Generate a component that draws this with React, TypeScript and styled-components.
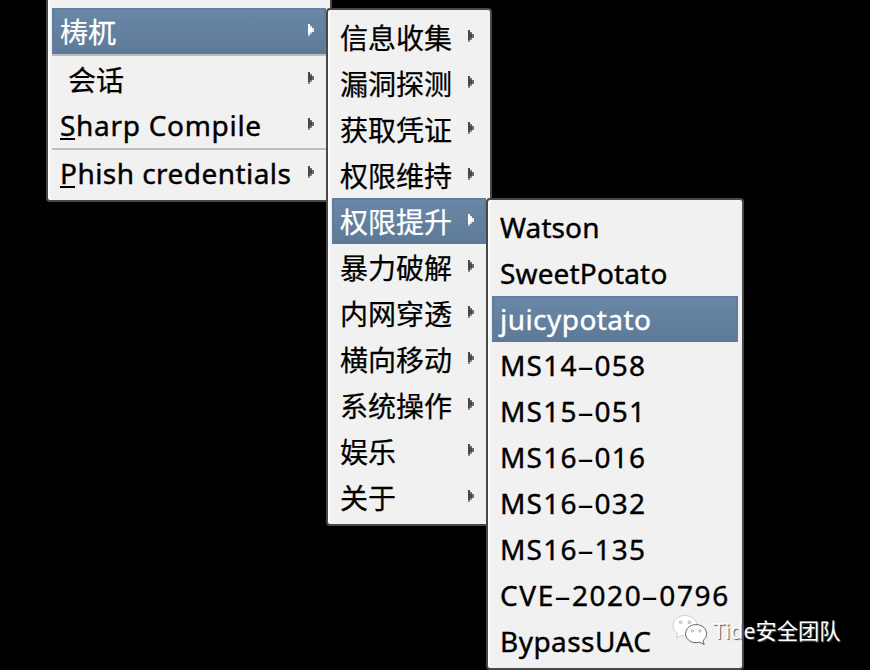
import React from "react";
import styled, { createGlobalStyle, css } from "styled-components";

const GlobalStyle = createGlobalStyle`
  * { box-sizing: border-box; }
  body { margin: 0; background: #000; overflow: hidden; }
`;

const Desktop = styled.main`
  position: relative;
  width: 870px;
  height: 670px;
  overflow: hidden;
  background: #000;
  font-family: "Noto Sans", "Noto Sans CJK SC", sans-serif;
  font-size: 28px;
  color: #000;
`;

const Menu = styled.div<{ $x: number; $y: number; $w: number; $topPad?: number }>`
  position: absolute;
  left: ${(p) => p.$x}px;
  top: ${(p) => p.$y}px;
  width: ${(p) => p.$w}px;
  padding: ${(p) => p.$topPad ?? 4}px 4px 4px;
  border: 2px solid #484848;
  border-radius: 4px;
  background: #f1f1f1;
  box-shadow: inset 2px 0 #fdfdfd;
`;

const Item = styled.div<{ $active?: boolean; $indent?: number }>`
  display: flex;
  align-items: center;
  justify-content: space-between;
  height: 46px;
  padding: 0 12px 0 ${(p) => 8 + (p.$indent ?? 0)}px;
  white-space: pre;
  ${(p) =>
    p.$active &&
    css`
      color: #fff;
      background: linear-gradient(#6a88a7, #5d7997);
      box-shadow: inset 0 2px #607e9d, inset 2px 0 #607d9b, inset -2px 0 #607d9b;
    `}
`;

const Label = styled.span<{ $spacing?: number; $cjk?: boolean }>`
  line-height: 46px;
  height: 46px;
  padding-top: ${(p) => (p.$cjk ? 1 : 0)}px;
  font-weight: 400;
  -webkit-text-stroke: ${(p) => (p.$cjk ? 0.25 : 0.4)}px currentColor;
  letter-spacing: ${(p) => p.$spacing ?? 0}px;
`;

const Mnemonic = styled.span`
  display: inline-block;
  height: 34px;
  line-height: 34px;
  background: linear-gradient(#000, #000) 0 30px / 15px 2px no-repeat;
`;

const Dash = styled.span`
  display: inline-block;
  width: 17px;
  text-align: center;
  letter-spacing: 0;
  -webkit-text-stroke-width: 0;
  transform: translateX(-1px) scaleX(1.95);
`;

const Separator = styled.div`
  height: 2px;
  background: #bdbdbd;
`;

const ArrowIcon = styled.svg`
  flex: none;
  width: 6px;
  height: 12px;
  margin-top: -2px;
`;

const Arrow = ({ light }: { light?: boolean }) => (
  <ArrowIcon viewBox="0 0 6 12" shapeRendering="crispEdges">
    <path d="M0 0h2v10H0zM2 4h2v4H2z" fill={light ? "#fff" : "#484848"} />
    <path d="M2 2h2v2H2zM4 4h2v4H4z" fill={light ? "#e8ebee" : "#6c6c6c"} />
    <path d="M0 10h2v2H0zM2 8h2v2H2z" fill={light ? "#c5c9ce" : "#8a8a8a"} />
  </ArrowIcon>
);

const Watermark = styled.div`
  position: absolute;
  left: 672px;
  top: 610px;
  display: flex;
  align-items: center;
  gap: 5px;
  height: 38px;
  color: #fff;
  font-size: 21.3px;
  text-shadow: 1px 1px 1px #555;
`;

const WechatMark = () => (
  <svg width="36" height="34" viewBox="0 0 36 34" fill="#fff" stroke="#bbb" strokeWidth=".7">
    <path d="M13 3.500C6 3.500 1 8.100 1 13.700c0 3.500 1.800 6.100 4.700 8L4.500 26l4.700-2.600c1.200.3 2.500.5 3.800.5 6.800 0 12.200-4.600 12.200-10.200S19.800 3.500 13 3.500z" />
    <path d="M24 12.600c-5.900 0-10.400 4-10.400 9s4.500 9.100 10.400 9.100c1.300 0 2.600-.2 3.700-.6l4.500 2.500-1.200-4c2.200-1.700 3.600-4.100 3.600-7 0-5-4.700-9-10.600-9z" stroke="#555" strokeWidth=".9" />
    <g stroke="#888">
      <circle cx="8.700" cy="10.300" r="1.300" />
      <circle cx="17.500" cy="10.300" r="1.300" />
      <circle cx="20.500" cy="18.900" r="1.100" />
      <circle cx="28" cy="18.900" r="1.100" />
    </g>
  </svg>
);

const categories = ["信息收集", "漏洞探测", "获取凭证", "权限维持", "权限提升", "暴力破解", "内网穿透", "横向移动", "系统操作", "娱乐", "关于"];

const exploits: { name: string; spacing: number }[] = [
  { name: "Watson", spacing: 0.1 },
  { name: "SweetPotato", spacing: 0.15 },
  { name: "juicypotato", spacing: 0.45 },
  { name: "MS14-058", spacing: 1.2 },
  { name: "MS15-051", spacing: 1.2 },
  { name: "MS16-016", spacing: 1.2 },
  { name: "MS16-032", spacing: 1.2 },
  { name: "MS16-135", spacing: 1.2 },
  { name: "CVE-2020-0796", spacing: 1.6 },
  { name: "BypassUAC", spacing: 0.45 },
];

const withDashes = (name: string) =>
  name.split("-").map((part, i) => (
    <React.Fragment key={i}>
      {i > 0 && <Dash>-</Dash>}
      {part}
    </React.Fragment>
  ));

export default function App() {
  return (
    <>
      <GlobalStyle />
      <Desktop>
        <Menu $x={46} $y={-40} $w={286} $topPad={46}>
          <Item $active>
            <Label $cjk>梼杌</Label>
            <Arrow light />
          </Item>
          <Separator />
          <Item $indent={8}>
            <Label $cjk>会话</Label>
            <Arrow />
          </Item>
          <Item>
            <Label $spacing={0.7}><Mnemonic>S</Mnemonic>harp Compile</Label>
            <Arrow />
          </Item>
          <Separator />
          <Item>
            <Label $spacing={0.45}><Mnemonic>P</Mnemonic>hish credentials</Label>
            <Arrow />
          </Item>
        </Menu>
        <Menu $x={326} $y={8} $w={166}>
          {categories.map((name) => (
            <Item key={name} $active={name === "权限提升"}>
              <Label $cjk>{name}</Label>
              <Arrow light={name === "权限提升"} />
            </Item>
          ))}
        </Menu>
        <Menu $x={486} $y={198} $w={258}>
          {exploits.map(({ name, spacing }) => (
            <Item key={name} $active={name === "juicypotato"}>
              <Label $spacing={spacing}>{withDashes(name)}</Label>
            </Item>
          ))}
        </Menu>
        <Watermark>
          <WechatMark />
          <span>Tide安全团队</span>
        </Watermark>
      </Desktop>
    </>
  );
}
